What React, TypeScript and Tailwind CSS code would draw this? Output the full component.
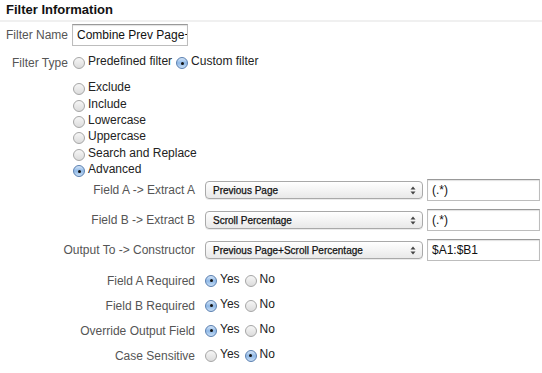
import React from 'react';

const Radio = ({ checked }: { checked?: boolean }) => (
  <span
    className={`inline-flex h-[12px] w-[12px] shrink-0 items-center justify-center rounded-full border ${
      checked
        ? 'border-[#5a7fb0] bg-gradient-to-b from-[#d5e6f8] via-[#8fb8e6] to-[#c8def5]'
        : 'border-[#a6a6a6] bg-gradient-to-b from-[#f6f6f6] to-[#dcdcdc]'
    }`}
  >
    {checked && <span className="h-[3px] w-[3px] rounded-full bg-[#111]" />}
  </span>
);

const RadioOption = ({ label, checked }: { label: string; checked?: boolean }) => (
  <label className="flex items-center gap-[3px] whitespace-nowrap">
    <Radio checked={checked} />
    <span className="relative -top-[2px] text-[12px] text-[#222]">{label}</span>
  </label>
);

const Select = ({ value }: { value: string }) => (
  <div className="flex h-[18px] w-[218px] items-center justify-between rounded-[4px] border border-[#a9a9a9] bg-gradient-to-b from-white to-[#e9e9e9] pl-[7px] pr-[6px] shadow-[0_1px_0_rgba(0,0,0,0.08)]">
    <span className="whitespace-nowrap text-[10px] text-[#111] [-webkit-text-stroke:0.25px_#111]">{value}</span>
    <svg width="6" height="9" viewBox="0 0 6 9">
      <path d="M0.5 3.5 L3 0.5 L5.5 3.5 Z" fill="#444" />
      <path d="M0.5 5.5 L3 8.5 L5.5 5.5 Z" fill="#444" />
    </svg>
  </div>
);

const TextBox = ({ value, w }: { value: string; w: string }) => (
  <div className={`flex h-[22px] ${w} items-center overflow-hidden whitespace-nowrap border border-[#bdbdbd] border-t-[#999] bg-white pl-[4px] text-[12px] text-[#111] shadow-[inset_0_1px_1px_rgba(0,0,0,0.12)]`}>
    {value}
  </div>
);

const fieldRows = [
  { label: 'Field A -> Extract A', select: 'Previous Page', input: '(.*)' },
  { label: 'Field B -> Extract B', select: 'Scroll Percentage', input: '(.*)' },
  { label: 'Output To -> Constructor', select: 'Previous Page+Scroll Percentage', input: '$A1:$B1' },
];

const yesNoRows = [
  { label: 'Field A Required', yes: true },
  { label: 'Field B Required', yes: true },
  { label: 'Override Output Field', yes: true },
  { label: 'Case Sensitive', yes: false },
];

const filterTypes = ['Exclude', 'Include', 'Lowercase', 'Uppercase', 'Search and Replace', 'Advanced'];

export default function App() {
  return (
    <div className="h-[373px] w-[542px] overflow-hidden bg-white" style={{ fontFamily: '"Liberation Sans", Arial, sans-serif' }}>
      <div className="flex h-[20px] items-center pl-[6px] text-[13px] font-bold text-[#111]">Filter Information</div>
      <div className="h-[2px] bg-[#f0f0f0]" />

      <div className="mt-[2px] flex h-[21px] items-center">
        <span className="w-[72px] shrink-0 whitespace-nowrap pl-[6px] text-[12px] text-[#555]">Filter Name</span>
        <TextBox value="Combine Prev Page+Scroll" w="w-[116px]" />
      </div>

      <div className="mt-[8px] flex h-[20px] items-center">
        <span className="w-[73px] shrink-0 whitespace-nowrap pl-[12px] text-[12px] text-[#555]">Filter Type</span>
        <div className="flex items-center gap-[4px]">
          <RadioOption label="Predefined filter" />
          <RadioOption label="Custom filter" checked />
        </div>
      </div>

      <div className="mt-[8px] flex flex-col pl-[73px]">
        {filterTypes.map((t) => (
          <div key={t} className="flex h-[16.4px] items-center">
            <RadioOption label={t} checked={t === 'Advanced'} />
          </div>
        ))}
      </div>

      <div className="-mt-[4px] flex flex-col">
        {fieldRows.map((r) => (
          <div key={r.label} className="flex h-[30px] items-center">
            <span className="w-[195px] shrink-0 whitespace-nowrap text-right text-[12px] text-[#555]">{r.label}</span>
            <div className="ml-[10px]">
              <Select value={r.select} />
            </div>
            <div className="ml-[4px]">
              <TextBox value={r.input} w="w-[113px]" />
            </div>
          </div>
        ))}
      </div>

      <div className="mt-[3px] flex flex-col">
        {yesNoRows.map((r) => (
          <div key={r.label} className="flex h-[25px] items-center">
            <span className="w-[195px] shrink-0 whitespace-nowrap text-right text-[12px] text-[#555]">{r.label}</span>
            <div className="ml-[10px] flex items-center gap-[5px]">
              <RadioOption label="Yes" checked={r.yes} />
              <RadioOption label="No" checked={!r.yes} />
            </div>
          </div>
        ))}
      </div>
    </div>
  );
}
